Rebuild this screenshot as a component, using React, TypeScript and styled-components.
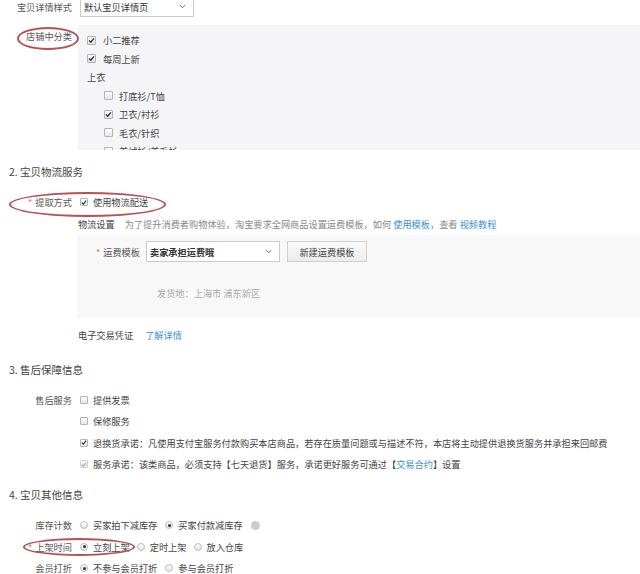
import React from "react"
import styled, { createGlobalStyle, css } from "styled-components"

const GlobalStyle = createGlobalStyle`
    html, body {
        margin: 0;
        padding: 0;
        background: #fff;
    }
    body {
        font-family: "Noto Sans CJK SC", "Liberation Sans", sans-serif;
        font-size: 9.2px;
        color: #555;
    }
`

const Page = styled.div`
    position: relative;
    width: 640px;
    height: 574px;
    overflow: hidden;
    background: #fff;
`

const Row = styled.div<{ $h?: number; $mt?: number }>`
    display: flex;
    align-items: center;
    height: ${(p) => p.$h ?? 18}px;
    margin-top: ${(p) => p.$mt ?? 0}px;
    white-space: nowrap;
`

const Star = styled.span`
    color: #e07474;
    font-size: 9px;
    margin-right: 3px;
`

const Label = styled.div`
    width: 72px;
    flex: none;
    text-align: right;
    color: #555;
`

const Field = styled.div<{ $gap?: number }>`
    display: flex;
    align-items: center;
    gap: ${(p) => p.$gap ?? 8}px;
    margin-left: 8px;
`

const Option = styled.label<{ $gap?: number }>`
    display: inline-flex;
    align-items: center;
    gap: ${(p) => p.$gap ?? 5}px;
    color: #444;
`

const Select = styled.div<{ $w: number; $bold?: boolean }>`
    display: flex;
    align-items: center;
    justify-content: space-between;
    box-sizing: border-box;
    width: ${(p) => p.$w}px;
    height: 21px;
    padding: 0 7px 0 3px;
    border: 1px solid #ccc;
    background: #fff;
    color: #333;
    font-weight: ${(p) => (p.$bold ? 700 : 400)};
`

const Chevron = () => (
    <svg width="7" height="5" viewBox="0 0 7 5">
        <path d="M0.8 1 L3.5 3.8 L6.2 1" fill="none" stroke="#777" strokeWidth="1" />
    </svg>
)

const Panel = styled.div<{ $ml: number; $h: number; $bg: string }>`
    box-sizing: border-box;
    margin-left: ${(p) => p.$ml}px;
    height: ${(p) => p.$h}px;
    overflow: hidden;
    background: ${(p) => p.$bg};
`

const TopBlock = styled.div`
    display: flex;
    align-items: flex-start;
    margin-top: 8px;
`

const TopLabel = styled(Label)`
    padding-top: 4px;
`

const CategoryPanel = styled(Panel)`
    flex: 1;
    padding: 6px 0 0 9px;
`

const PanelItem = styled.div<{ $indent?: number }>`
    display: flex;
    align-items: center;
    height: 18.5px;
    padding-left: ${(p) => p.$indent ?? 0}px;
    color: #444;
    white-space: nowrap;
`

const Box = styled.span<{ $off?: boolean; $size?: number }>`
    display: inline-flex;
    align-items: center;
    justify-content: center;
    box-sizing: border-box;
    flex: none;
    width: ${(p) => p.$size ?? 8}px;
    height: ${(p) => p.$size ?? 8}px;
    border: 1px solid ${(p) => (p.$off ? "#d2d2d2" : "#b4b4b4")};
    border-radius: 1px;
    background: linear-gradient(#fdfdfd, #e6e6e6);
`

const Check = ({ on, off, size }: { on?: boolean; off?: boolean; size?: number }) => (
    <Box $off={off} $size={size}>
        {on && (
            <svg width="7" height="7" viewBox="0 0 7 7">
                <path
                    d="M1 3.6 L2.8 5.3 L6 1.4"
                    fill="none"
                    stroke={off ? "#b0b0b0" : "#333"}
                    strokeWidth="1.4"
                />
            </svg>
        )}
    </Box>
)

const Radio = styled.span<{ $on?: boolean }>`
    display: inline-flex;
    align-items: center;
    justify-content: center;
    box-sizing: border-box;
    flex: none;
    width: 8px;
    height: 8px;
    border: 1px solid #bcbcbc;
    border-radius: 50%;
    background: linear-gradient(#fdfdfd, #e4e4e4);
    &::after {
        content: "";
        display: ${(p) => (p.$on ? "block" : "none")};
        width: 3px;
        height: 3px;
        border-radius: 50%;
        background: #333;
    }
`

const Heading = styled.div<{ $mt: number }>`
    height: 16px;
    line-height: 16px;
    margin-top: ${(p) => p.$mt}px;
    padding-left: 9px;
    font-size: 10.5px;
    color: #444;
`

const Sub = styled.div<{ $ml?: number }>`
    margin-left: ${(p) => p.$ml ?? 78}px;
`

const Dark = styled.span`
    color: #444;
`

const Muted = styled.span<{ $light?: boolean; $ml?: number }>`
    color: ${(p) => (p.$light ? "#aaa" : "#888")};
    margin-left: ${(p) => p.$ml ?? 0}px;
`

const Link = styled.a<{ $ml?: number }>`
    color: #3b8fd0;
    text-decoration: none;
    cursor: pointer;
    margin-left: ${(p) => p.$ml ?? 0}px;
`

const Button = styled.button`
    box-sizing: border-box;
    width: 80px;
    height: 21px;
    margin-left: 7px;
    border: 1px solid #cfcfcf;
    background: linear-gradient(#fafafa, #ececec);
    color: #444;
    font-family: inherit;
    font-size: 9.2px;
    padding: 0;
`

const FreightPanel = styled(Panel)`
    margin-top: 3px;
    padding-top: 6px;
`

const FreightRow = styled.div`
    display: flex;
    align-items: center;
    white-space: nowrap;
`

const FreightLabel = styled.div`
    width: 69px;
    padding-right: 6px;
    box-sizing: border-box;
    text-align: right;
    color: #555;
`

const Origin = styled.div`
    height: 14px;
    line-height: 14px;
    margin: 24px 0 0 80px;
`

const Help = styled.span`
    display: inline-block;
    width: 9px;
    height: 9px;
    border-radius: 50%;
    background: #cbcbd3;
`

const Ring = styled.div<{ $x: number; $y: number; $w: number; $h: number }>`
    position: absolute;
    left: ${(p) => p.$x}px;
    top: ${(p) => p.$y}px;
    width: ${(p) => p.$w}px;
    height: ${(p) => p.$h}px;
    box-sizing: border-box;
    border: 2px solid rgba(168, 52, 56, 0.85);
    border-radius: 50%;
    pointer-events: none;
`

const RowGroup = styled.div<{ $mt: number }>`
    margin-top: ${(p) => p.$mt}px;
`

const categories = [
    { text: "打底衫/T恤", on: false },
    { text: "卫衣/衬衫", on: true },
    { text: "毛衣/针织", on: false },
    { text: "羊绒衫/羊毛衫", on: false },
]

export default function App() {
    return (
        <>
            <GlobalStyle />
            <Page>
                <Row $h={21} $mt={-4}>
                    <Label>宝贝详情样式</Label>
                    <Field>
                        <Select $w={114}>
                            <span>默认宝贝详情页</span>
                            <Chevron />
                        </Select>
                    </Field>
                </Row>

                <TopBlock>
                    <TopLabel>店铺中分类</TopLabel>
                    <CategoryPanel $ml={6} $h={125} $bg="#f5f5f7">
                        <PanelItem>
                            <Option $gap={7}>
                                <Check on size={9} />
                                小二推荐
                            </Option>
                        </PanelItem>
                        <PanelItem>
                            <Option $gap={7}>
                                <Check on size={9} />
                                每周上新
                            </Option>
                        </PanelItem>
                        <PanelItem>上衣</PanelItem>
                        {categories.map((c) => (
                            <PanelItem key={c.text} $indent={17}>
                                <Option $gap={6}>
                                    <Check on={c.on} size={9} />
                                    {c.text}
                                </Option>
                            </PanelItem>
                        ))}
                    </CategoryPanel>
                </TopBlock>

                <Heading $mt={14}>2. 宝贝物流服务</Heading>
                <Row $h={18} $mt={13}>
                    <Label>
                        <Star>*</Star>提取方式
                    </Label>
                    <Field>
                        <Option>
                            <Check on />
                            使用物流配送
                        </Option>
                    </Field>
                </Row>
                <Sub>
                    <Row $h={16} $mt={5}>
                        <Dark>物流设置</Dark>
                        <Muted $ml={10}>
                            为了提升消费者购物体验，淘宝要求全网商品设置运费模板，如何{" "}
                            <Link>使用模板</Link>，查看 <Link>视频教程</Link>
                        </Muted>
                    </Row>
                </Sub>
                <FreightPanel $ml={77} $h={83} $bg="#f8f8f8">
                    <FreightRow>
                        <FreightLabel>
                            <Star>*</Star>运费模板
                        </FreightLabel>
                        <Select $w={134} $bold>
                            <span>卖家承担运费哦</span>
                            <Chevron />
                        </Select>
                        <Button>新建运费模板</Button>
                    </FreightRow>
                    <Origin>
                        <Muted $light>发货地：上海市 浦东新区</Muted>
                    </Origin>
                </FreightPanel>
                <Sub>
                    <Row $h={16} $mt={9}>
                        <Dark>电子交易凭证</Dark>
                        <Link $ml={12}>了解详情</Link>
                    </Row>
                </Sub>

                <Heading $mt={19}>3. 售后保障信息</Heading>
                <RowGroup $mt={11.5}>
                    <Row $h={21.3}>
                        <Label>售后服务</Label>
                        <Field>
                            <Option>
                                <Check />
                                提供发票
                            </Option>
                        </Field>
                    </Row>
                    <Row $h={21.3}>
                        <Label />
                        <Field>
                            <Option>
                                <Check />
                                保修服务
                            </Option>
                        </Field>
                    </Row>
                    <Row $h={21.3}>
                        <Label />
                        <Field>
                            <Option>
                                <Check on />
                                退换货承诺：凡使用支付宝服务付款购买本店商品，若存在质量问题或与描述不符，本店将主动提供退换货服务并承担来回邮费
                            </Option>
                        </Field>
                    </Row>
                    <Row $h={21.3}>
                        <Label />
                        <Field>
                            <Option>
                                <Check on off />
                                <span>
                                    服务承诺：该类商品，必须支持【七天退货】服务，承诺更好服务可通过【<Link>交易合约</Link>】设置
                                </span>
                            </Option>
                        </Field>
                    </Row>
                </RowGroup>

                <Heading $mt={12}>4. 宝贝其他信息</Heading>
                <RowGroup $mt={12}>
                    <Row $h={21.5}>
                        <Label>库存计数</Label>
                        <Field>
                            <Option>
                                <Radio />
                                买家拍下减库存
                            </Option>
                            <Option>
                                <Radio $on />
                                买家付款减库存
                            </Option>
                            <Help />
                        </Field>
                    </Row>
                    <Row $h={21.5}>
                        <Label>
                            <Star>*</Star>上架时间
                        </Label>
                        <Field $gap={7}>
                            <Option>
                                <Radio $on />
                                立刻上架
                            </Option>
                            <Option>
                                <Radio />
                                定时上架
                            </Option>
                            <Option>
                                <Radio />
                                放入仓库
                            </Option>
                        </Field>
                    </Row>
                    <Row $h={21.5}>
                        <Label>会员打折</Label>
                        <Field>
                            <Option>
                                <Radio $on />
                                不参与会员打折
                            </Option>
                            <Option>
                                <Radio />
                                参与会员打折
                            </Option>
                        </Field>
                    </Row>
                </RowGroup>

                <Ring $x={17} $y={27} $w={62} $h={23} />
                <Ring $x={9} $y={192} $w={157} $h={25} />
                <Ring $x={23} $y={538} $w={112} $h={18} />
            </Page>
        </>
    )
}
